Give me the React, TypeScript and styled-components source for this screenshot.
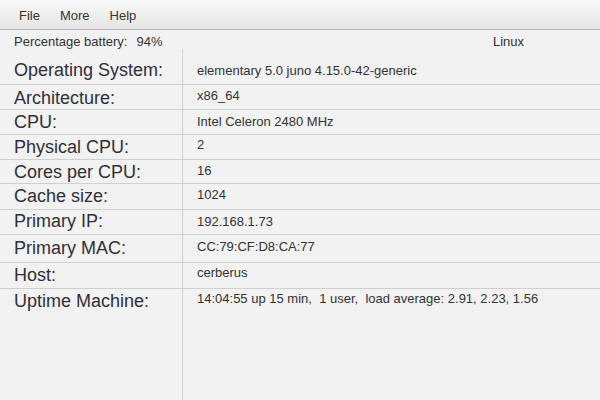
import React from 'react';
import styled, { createGlobalStyle } from 'styled-components';

const GlobalStyle = createGlobalStyle`
  html, body {
    margin: 0;
    padding: 0;
    background: #f2f2f2;
  }
  body {
    font-family: "Liberation Sans", Arial, sans-serif;
    color: #333;
  }
  #root {
    height: 400px;
  }
`;

const Window = styled.div`
  width: 600px;
  height: 400px;
  display: flex;
  flex-direction: column;
  background: #f2f2f2;
  overflow: hidden;
`;

const MenuBar = styled.div`
  height: 30px;
  box-sizing: border-box;
  display: flex;
  align-items: flex-start;
  padding: 8px 0 0 9px;
  background: linear-gradient(#f9f9f9, #e5e5e5);
  border-bottom: 1px solid #b5b5b5;
`;

const MenuItem = styled.span`
  padding: 0 10px;
  font-size: 13px;
  line-height: 15px;
  color: #333;
`;

const StatusRow = styled.div`
  height: 19px;
  box-sizing: border-box;
  display: flex;
  justify-content: space-between;
  padding: 4px 76px 0 14px;
  font-size: 13px;
  line-height: 15px;
`;

const Battery = styled.div`
  display: flex;
  gap: 9px;
`;

const Table = styled.div`
  flex: 1;
  display: flex;
  flex-direction: column;
`;

const Row = styled.div<{ $height?: number; $last?: boolean }>`
  display: grid;
  grid-template-columns: 183px 1fr;
  box-sizing: border-box;
  height: ${p => (p.$height ? `${p.$height}px` : 'auto')};
  flex: ${p => (p.$last ? 1 : 'none')};
  border-bottom: ${p => (p.$last ? 'none' : '1px solid #d0d0d0')};
`;

const Label = styled.div<{ $pad: number }>`
  border-right: 1px solid #d0d0d0;
  padding: ${p => p.$pad}px 0 0 14px;
  font-size: 18px;
  line-height: 21px;
  color: #2f2f3a;
  white-space: nowrap;
`;

const Value = styled.div<{ $pad: number }>`
  padding: ${p => p.$pad}px 0 0 14px;
  font-size: 13px;
  line-height: 15px;
  color: #333;
  white-space: pre;
`;

type Info = { label: string; value: string; height?: number; labelPad: number; valuePad: number };

const rows: Info[] = [
  { label: 'Operating System:', value: 'elementary 5.0 juno 4.15.0-42-generic', height: 36, labelPad: 11, valuePad: 14 },
  { label: 'Architecture:', value: 'x86_64', height: 25, labelPad: 3, valuePad: 3 },
  { label: 'CPU:', value: 'Intel Celeron 2480 MHz', height: 25, labelPad: 2, valuePad: 4 },
  { label: 'Physical CPU:', value: '2', height: 25, labelPad: 2, valuePad: 2 },
  { label: 'Cores per CPU:', value: '16', height: 24, labelPad: 2, valuePad: 3 },
  { label: 'Cache size:', value: '1024', height: 26, labelPad: 2, valuePad: 3 },
  { label: 'Primary IP:', value: '192.168.1.73', height: 25, labelPad: 1, valuePad: 4 },
  { label: 'Primary MAC:', value: 'CC:79:CF:D8:CA:77', height: 28, labelPad: 3, valuePad: 4 },
  { label: 'Host:', value: 'cerberus', height: 26, labelPad: 2, valuePad: 2 },
  { label: 'Uptime Machine:', value: '14:04:55 up 15 min,  1 user,  load average: 2.91, 2.23, 1.56', labelPad: 2, valuePad: 2 },
];

const App: React.FC = () => {
  return (
    <Window>
      <GlobalStyle />
      <MenuBar>
        <MenuItem>File</MenuItem>
        <MenuItem>More</MenuItem>
        <MenuItem>Help</MenuItem>
      </MenuBar>

      <StatusRow>
        <Battery>
          <span>Percentage battery:</span>
          <span>94%</span>
        </Battery>
        <span>Linux</span>
      </StatusRow>

      <Table>
        {rows.map((row, i) => (
          <Row key={row.label} $height={row.height} $last={i === rows.length - 1}>
            <Label $pad={row.labelPad}>{row.label}</Label>
            <Value $pad={row.valuePad}>{row.value}</Value>
          </Row>
        ))}
      </Table>
    </Window>
  );
};

export default App;
